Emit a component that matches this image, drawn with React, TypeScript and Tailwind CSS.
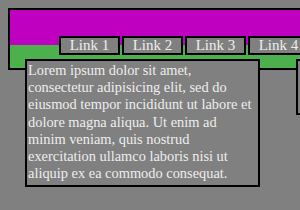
import React from 'react';

const links = ['Link 1', 'Link 2', 'Link 3', 'Link 4'];

const App = () => {
    return (
        <div className="w-[300px] h-[210px] overflow-hidden bg-[#808080] pt-2 pl-2 font-['Liberation_Serif',serif]">
            {/* Header box */}
            <div className="w-[330px] h-[62px] border-2 border-black bg-[#4cb04c]">
                <div className="h-[35px] bg-[#c000c0]" />
                <nav className="relative -mt-[9px] flex gap-[2px] pl-[49px]">
                    {links.map((l) => (
                        <a
                            key={l}
                            href="#"
                            className="w-[61px] h-[19px] shrink-0 border-2 border-black bg-[#808080] text-[#eeeeee] text-[15px] leading-[15px] text-center"
                        >
                            {l}
                        </a>
                    ))}
                </nav>
            </div>

            {/* Columns */}
            <div className="relative -mt-[11px] flex items-start gap-[36px] pl-[17px]">
                <div className="w-[235px] shrink-0 border-2 border-black bg-[#808080] px-[1px] pt-[1px] pb-[3px] text-[14.4px] leading-[17.2px] text-[#eeeeee]">
                    Lorem ipsum dolor sit amet, consectetur adipisicing elit, sed do eiusmod tempor incididunt ut labore et dolore magna aliqua. Ut enim ad minim veniam, quis nostrud exercitation ullamco laboris nisi ut aliquip ex ea commodo consequat.
                </div>
                <div className="w-[120px] h-[56px] shrink-0 border-2 border-black bg-[#808080]" />
            </div>
        </div>
    );
};

export default App;
